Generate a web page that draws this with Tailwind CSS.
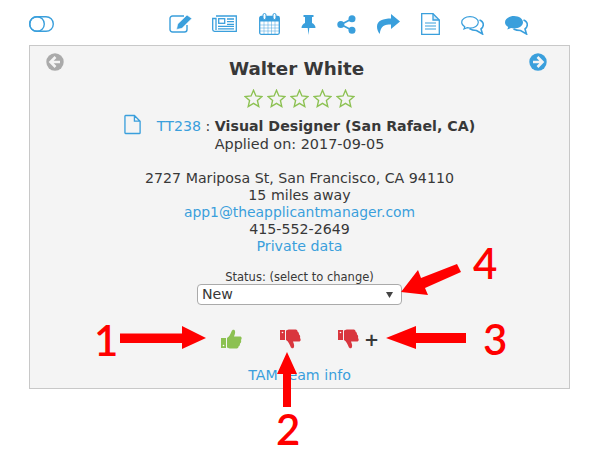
<!DOCTYPE html>
<html lang="en">
<head>
<meta charset="UTF-8">
<title>Applicant</title>
<script src="https://cdn.jsdelivr.net/npm/@tailwindcss/browser@4"></script>
</head>
<body class="bg-white font-['DejaVu_Sans',sans-serif] text-[14.2px] text-[#383838]">
<div class="relative w-[601px] h-[456px] overflow-hidden">

  <!-- top toolbar -->
  <div class="h-[45px] pl-[29px] flex items-start">
    <svg class="mt-[16px] w-[25px] h-[16px]" viewBox="0 0 25 16" fill="none" stroke="#3a9fdc" stroke-width="1.4">
      <rect x="0.7" y="0.7" width="23.6" height="14.6" rx="7.3"/>
      <circle cx="8" cy="8" r="7.3"/>
    </svg>
    <div class="ml-[115px] flex items-start text-[#3a9fdc]">
      <!-- edit -->
      <svg class="mt-[14px] w-[23px] h-[19px]" viewBox="0 0 23 19" fill="none" stroke="currentColor" stroke-width="1.4">
        <path d="M15 2H3.500A2.500 2.500 0 0 0 1 4.500V15.500A2.500 2.500 0 0 0 3.500 18H15.500A2.500 2.500 0 0 0 18 15.500V11"/>
        <path d="M7.500 15.500L8.700 10 18 1 22.800 4.500 13 14.300z" fill="currentColor" stroke="#fff" stroke-width="0.600"/>
      </svg>
      <!-- newspaper -->
      <svg class="ml-[20px] mt-[15px] w-[25px] h-[17px]" viewBox="0 0 25 17" fill="none" stroke="currentColor" stroke-width="1.300">
        <path d="M4 1H24.300V16.300H2.500A1.800 1.800 0 0 1 .7 14.500V3.500H4V15"/>
        <rect x="6.700" y="3.700" width="6" height="4.600"/>
        <path d="M15 4H22M15 6.700H22M15 9.300H22M6 11.300H22M6 13.800H22"/>
      </svg>
      <!-- calendar -->
      <svg class="ml-[22px] mt-[13px] w-[21px] h-[22px]" viewBox="0 0 21 22" fill="none" stroke="currentColor">
        <rect x="0.700" y="3.500" width="19.600" height="17.800" rx="1.500" stroke-width="1.300"/>
        <path d="M1 3.500H20V8.500H1z" fill="currentColor" stroke="none"/>
        <path d="M1 12H20M1 15H20M1 18H20M5 8V21M9 8V21M12.500 8V21M16 8V21" stroke-width="0.800" opacity="0.6"/>
        <rect x="4" y="0.500" width="3" height="6" rx="1.500" fill="#fff" stroke-width="1"/>
        <rect x="14" y="0.500" width="3" height="6" rx="1.500" fill="#fff" stroke-width="1"/>
      </svg>
      <!-- pin -->
      <svg class="ml-[21px] mt-[14px] w-[15px] h-[21px]" viewBox="0 0 15 21" fill="currentColor">
        <path d="M2.500 1H12.500V3H11V9C13 10 14.500 11.500 14.500 14H8.300L7.500 21 6.700 14H.5C.5 11.500 2 10 4 9V3H2.500z"/>
      </svg>
      <!-- share -->
      <svg class="ml-[21px] mt-[15px] w-[19px] h-[19px]" viewBox="0 0 19 19" fill="currentColor" stroke="currentColor">
        <circle cx="3.800" cy="9.500" r="3.500" stroke="none"/>
        <circle cx="15" cy="3.800" r="3.500" stroke="none"/>
        <circle cx="15" cy="15.200" r="3.500" stroke="none"/>
        <path d="M4 9.500L15 3.800M4 9.500L15 15.200" stroke-width="1.800" fill="none"/>
      </svg>
      <!-- reply -->
      <svg class="ml-[21px] mt-[14px] w-[23px] h-[20px]" viewBox="0 0 23 20" fill="currentColor">
        <path d="M14 0L23 7.500 14 15V10.500C8 10.500 3.500 11.500 2.800 20 .8 17.500 0 15 0 12.500 0 6.500 6.500 4.500 14 4.500z"/>
      </svg>
      <!-- document -->
      <svg class="ml-[21px] mt-[13px] w-[19px] h-[22px]" viewBox="0 0 19 22" fill="none" stroke="currentColor" stroke-width="1.300">
        <path d="M.7.7H12L18.300 7V21.300H.7z"/>
        <path d="M12 .7V7H18.300" fill="currentColor" fill-opacity="0.200"/>
        <path d="M4 10H15M4 13H15M4 16H15" stroke-width="1.200"/>
      </svg>
      <!-- comments outline -->
      <svg class="ml-[21px] mt-[16px] w-[23px] h-[19px]" viewBox="0 0 23 19" fill="none" stroke="currentColor" stroke-width="1.200">
        <path d="M9 .7C4.500.7.7 3 .7 6.300 .7 8.200 2 9.800 3.800 10.800L3 13 6.200 11.700C7.100 11.900 8 12 9 12 13.500 12 17.300 9.600 17.300 6.300S13.500.7 9 .7z"/>
        <path d="M18.500 4C21 5 22.300 6.800 22.300 8.800 22.300 10.500 21.300 12 20 13L21.500 18 15.500 14.500C13 14.500 10.500 14 8.500 12.500" stroke-width="1.600"/>
      </svg>
      <!-- comments solid -->
      <svg class="ml-[21px] mt-[16px] w-[23px] h-[19px]" viewBox="0 0 23 19" fill="currentColor" stroke="currentColor">
        <path d="M9 0C4 0 0 2.800 0 6.300 0 8.200 1.200 9.900 3.200 11L2.300 13.500 6 12C7 12.300 8 12.500 9 12.500 14 12.500 18 9.700 18 6.300S14 0 9 0z" stroke="none"/>
        <path d="M18.500 4C21 5 22.300 6.800 22.300 8.800 22.300 10.500 21.300 12 20 13L21.500 18 15.500 14.500C13 14.500 10.500 14 8.500 13" fill="none" stroke-width="1.600"/>
      </svg>
    </div>
  </div>

  <!-- applicant card -->
  <div class="relative ml-[29px] w-[541px] h-[344px] border border-[#c8c8c8] bg-[#f4f4f4] flex flex-col items-center">
    <svg class="absolute left-[16px] top-[7px] w-[18px] h-[18px]" viewBox="0 0 18 18">
      <circle cx="9" cy="9" r="8.700" fill="#aaa"/>
      <path d="M9.500 4L4.500 9 9.500 14M5 9H14" fill="none" stroke="#f4f4f4" stroke-width="2.600"/>
    </svg>
    <svg class="absolute left-[499px] top-[7px] w-[18px] h-[18px]" viewBox="0 0 18 18">
      <circle cx="9" cy="9" r="8.700" fill="#3a9fdc"/>
      <path d="M8.500 4L13.500 9 8.500 14M13 9H4" fill="none" stroke="#f4f4f4" stroke-width="2.600"/>
    </svg>

    <h1 class="mt-[11px] mr-[6px] h-[24px] leading-[24px] text-[18.300px] font-bold">Walter White</h1>

    <div class="mt-[8px] flex gap-[4px] h-[19px]">
      <svg class="w-[19px] h-[19px]" viewBox="0 0 18 18" fill="none" stroke="#8cc152" stroke-width="1.300"><path d="M9 1.200L11.300 6.600 17 7.100 12.700 10.900 14 16.600 9 13.600 4 16.600 5.300 10.900 1 7.100 6.700 6.600z"/></svg>
      <svg class="w-[19px] h-[19px]" viewBox="0 0 18 18" fill="none" stroke="#8cc152" stroke-width="1.300"><path d="M9 1.200L11.300 6.600 17 7.100 12.700 10.900 14 16.600 9 13.600 4 16.600 5.300 10.900 1 7.100 6.700 6.600z"/></svg>
      <svg class="w-[19px] h-[19px]" viewBox="0 0 18 18" fill="none" stroke="#8cc152" stroke-width="1.300"><path d="M9 1.200L11.300 6.600 17 7.100 12.700 10.900 14 16.600 9 13.600 4 16.600 5.300 10.900 1 7.100 6.700 6.600z"/></svg>
      <svg class="w-[19px] h-[19px]" viewBox="0 0 18 18" fill="none" stroke="#8cc152" stroke-width="1.300"><path d="M9 1.200L11.300 6.600 17 7.100 12.700 10.900 14 16.600 9 13.600 4 16.600 5.300 10.900 1 7.100 6.700 6.600z"/></svg>
      <svg class="w-[19px] h-[19px]" viewBox="0 0 18 18" fill="none" stroke="#8cc152" stroke-width="1.300"><path d="M9 1.200L11.300 6.600 17 7.100 12.700 10.900 14 16.600 9 13.600 4 16.600 5.300 10.900 1 7.100 6.700 6.600z"/></svg>
    </div>

    <div class="mt-[10px] flex items-center h-[18px]">
      <svg class="w-[18px] h-[21px] mr-[15px] -mt-[5px]" viewBox="0 0 19 21" fill="none" stroke="#3a9fdc" stroke-width="1.400">
        <path d="M1.700 1H11L17 7V19.300A.8.8 0 0 1 16.200 20H1.700A.8.8 0 0 1 1 19.300V1.700A.8.8 0 0 1 1.700 1zM11 1V7H17"/>
      </svg>
      <a class="text-[#3a9fdc]">TT238</a><span class="whitespace-pre"> : </span><b>Visual Designer (San Rafael, CA)</b>
    </div>
    <p class="leading-[17px] text-[14.400px]">Applied on: 2017-09-05</p>

    <div class="mt-[17px] flex flex-col items-center leading-[17px]">
      <p>2727 Mariposa St, San Francisco, CA 94110</p>
      <p>15 miles away</p>
      <a class="text-[#3a9fdc] text-[13.900px]">app1@theapplicantmanager.com</a>
      <p>415-552-2649</p>
      <a class="text-[#3a9fdc]">Private data</a>
    </div>

    <p class="mt-[16px] text-[11.500px] leading-[13px]">Status: (select to change)</p>
    <div class="w-[205px] h-[21px] bg-white border border-[#aaa] rounded-[4px] pl-[4px] pr-[8px] flex items-center justify-between leading-[19px]">
      <span>New</span>
      <svg class="w-[7px] h-[6px]" viewBox="0 0 7 6" fill="#444"><path d="M0 0H7L3.500 6z"/></svg>
    </div>

    <div class="mt-[24px] h-[20px] ml-[1px] flex items-start">
      <svg class="w-[21px] h-[20px]" viewBox="0 0 21 20" fill="#8cc152">
        <path d="M0 9H5V19H0z"/>
        <path d="M6 18.500V9C8.500 7.500 9.500 5 10.500 2.500 11 .5 13.500 0 14 2 14.500 4 13.500 6 13 7.500H19C21 7.500 21 10 20 11 20.500 12.500 20 14 19 14.500 19 16 18.500 17 17.500 17.500 17.500 19 16.500 19.500 15 19.500H10C8.500 19.500 7 19 6 18.500z"/>
        <circle cx="2.500" cy="16.500" r="0.800" fill="#fff"/>
      </svg>
      <svg class="ml-[38px] w-[21px] h-[20px]" viewBox="0 0 21 20" fill="#d9363e">
        <path d="M0 1H5V11H0z"/>
        <path d="M6 1.500V11C8.500 12.500 9.500 15 10.500 17.500 11 19.500 13.500 20 14 18 14.500 16 13.500 14 13 12.500H19C21 12.500 21 10 20 9 20.500 7.500 20 6 19 5.500 19 4 18.500 3 17.500 2.500 17.500 1 16.500.5 15 .5H10C8.500.5 7 1 6 1.500z"/>
        <circle cx="2.500" cy="3.500" r="0.800" fill="#fff"/>
      </svg>
      <svg class="ml-[37px] w-[21px] h-[20px]" viewBox="0 0 21 20" fill="#d9363e">
        <path d="M0 1H5V11H0z"/>
        <path d="M6 1.500V11C8.500 12.500 9.500 15 10.500 17.500 11 19.500 13.500 20 14 18 14.500 16 13.500 14 13 12.500H19C21 12.500 21 10 20 9 20.500 7.500 20 6 19 5.500 19 4 18.500 3 17.500 2.500 17.500 1 16.500.5 15 .5H10C8.500.5 7 1 6 1.500z"/>
        <circle cx="2.500" cy="3.500" r="0.800" fill="#fff"/>
      </svg>
      <span class="ml-[5px] mt-[1px] text-[18px] leading-[20px] font-bold">+</span>
    </div>

    <a class="mt-[18px] leading-[17px] text-[#3a9fdc]">TAM Team info</a>
  </div>

  <!-- red callouts drawn over the screenshot -->
  <svg class="absolute left-0 top-0 w-[601px] h-[456px] pointer-events-none" viewBox="0 0 601 456" fill="#ff0000">
    <path d="M120 333.500H182V326L206 338 182 349V343H120z"/>
    <path d="M283 407V374H277L287 352 297 374H291V407z"/>
    <path d="M466 333V343H416V349L386 338 416 326V333z"/>
    <path d="M457 264L461 272 425 288 428 295 401 292 418 270 421 278z"/>
  </svg>
  <span class="absolute left-[94px] top-[314px] font-['Lato',sans-serif] text-[42px] leading-[52px] text-[#ff0000] font-semibold">1</span>
  <span class="absolute left-[276px] top-[403px] font-['Lato',sans-serif] text-[42px] leading-[52px] text-[#ff0000] font-semibold">2</span>
  <span class="absolute left-[483px] top-[313px] font-['Lato',sans-serif] text-[42px] leading-[52px] text-[#ff0000] font-semibold">3</span>
  <span class="absolute left-[473px] top-[237px] font-['Lato',sans-serif] text-[42px] leading-[52px] text-[#ff0000] font-semibold">4</span>
</div>
</body>
</html>
